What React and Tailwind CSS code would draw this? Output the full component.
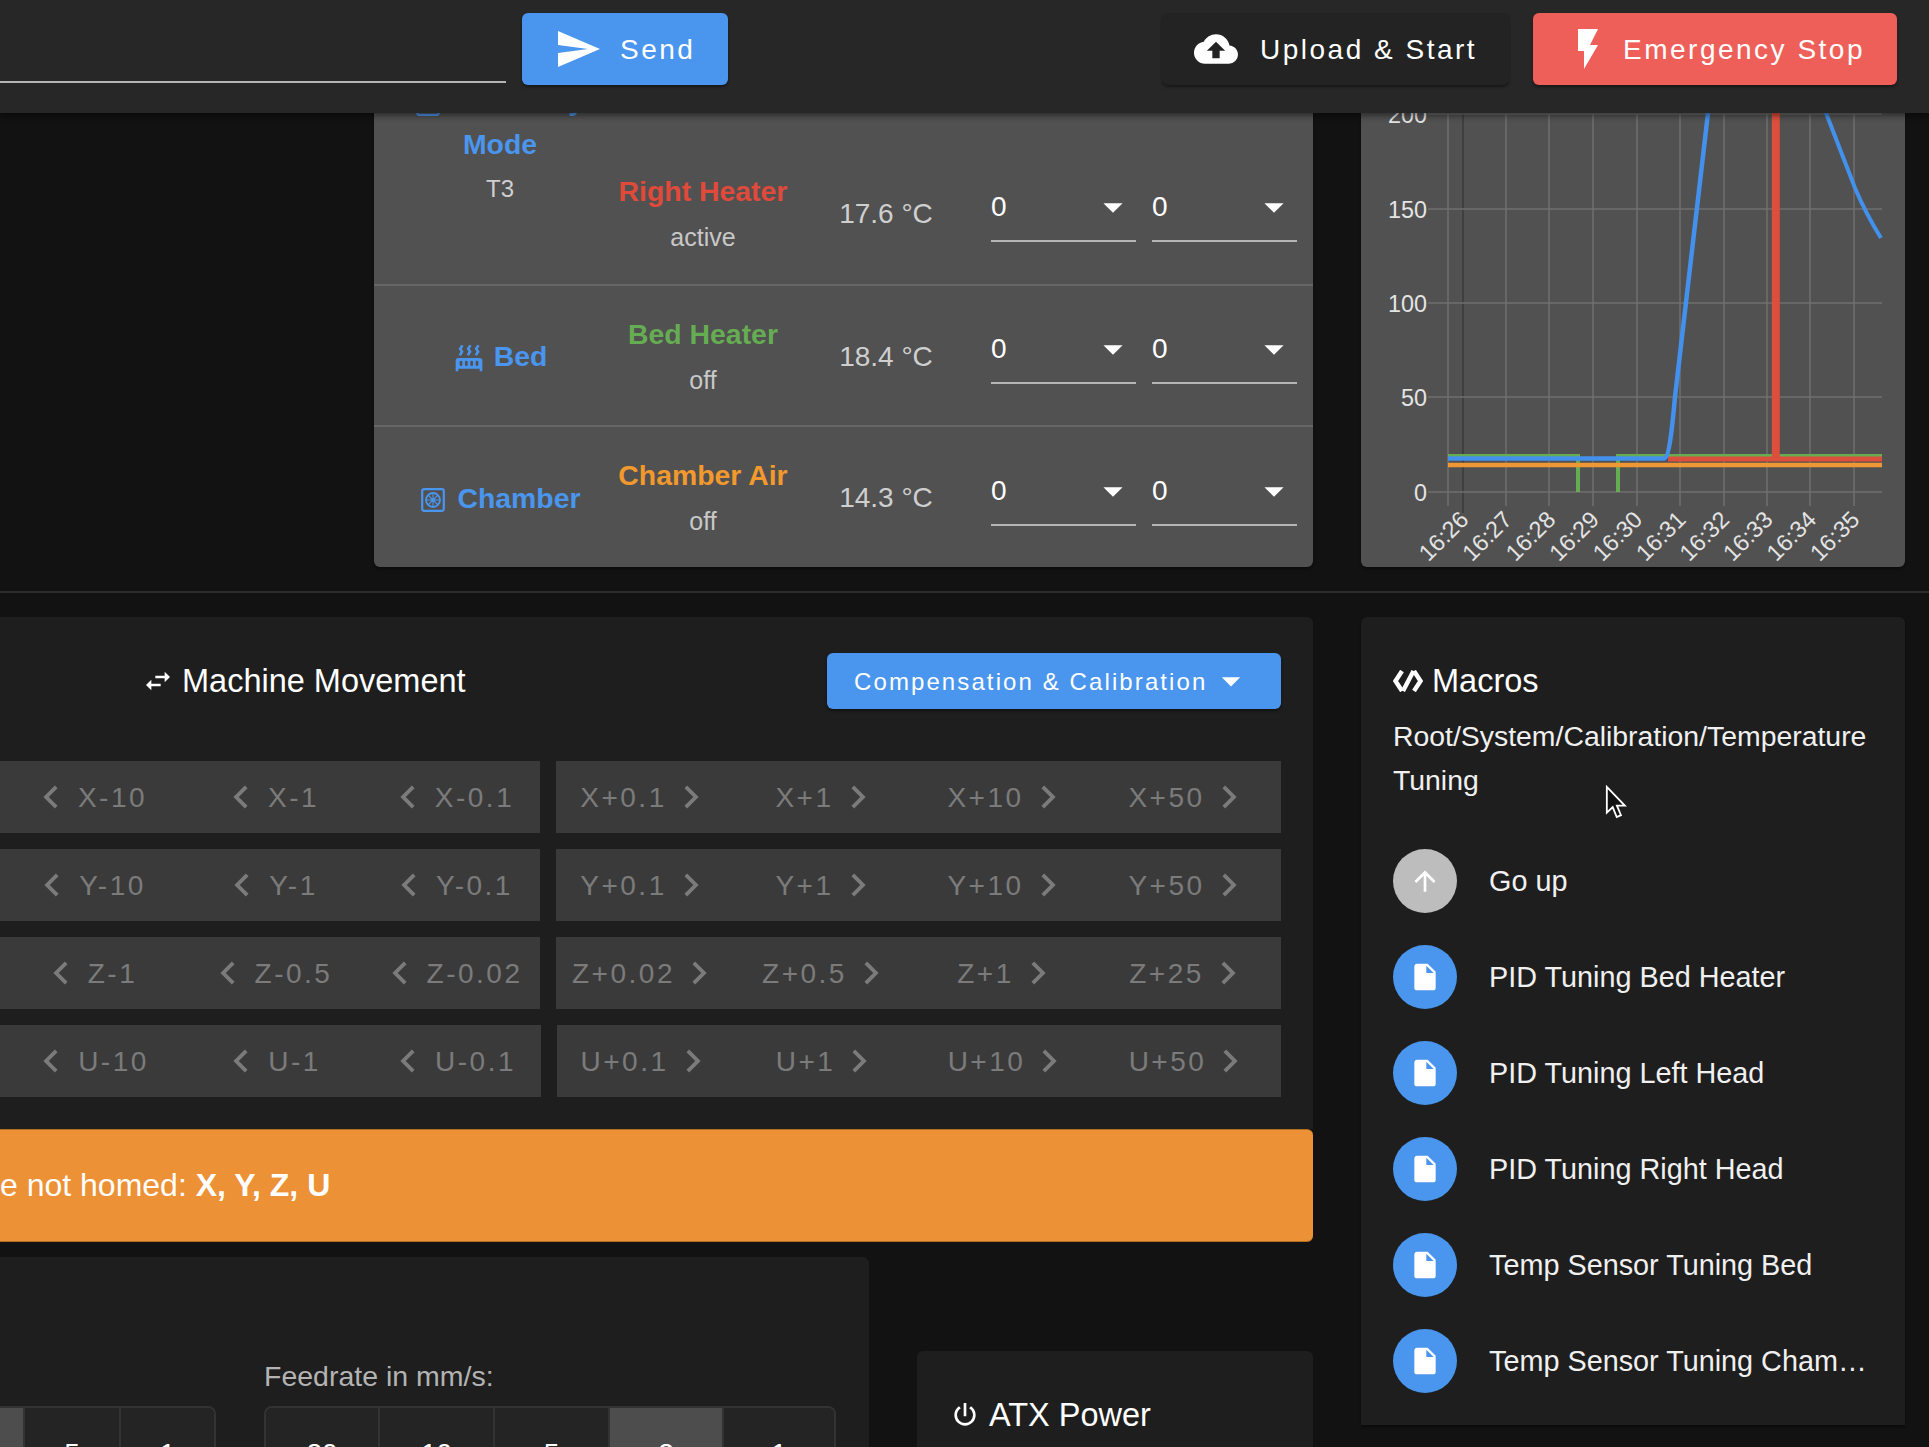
import React from 'react';

const mdi = {
  send: 'M2,21L23,12L2,3V10L17,12L2,14V21Z',
  upload: 'M14,13V17H10V13H7L12,8L17,13M19.35,10.03C18.67,6.59 15.64,4 12,4C9.11,4 6.6,5.64 5.35,8.03C2.34,8.36 0,10.9 0,14A6,6 0 0,0 6,20H19A5,5 0 0,0 24,15C24,12.36 21.95,10.22 19.35,10.03Z',
  flash: 'M7,2V13H10V22L17,10H13L17,2H7Z',
  swap: 'M21,9L17,5V8H10V10H17V13M7,11L3,15L7,19V16H14V14H7V11Z',
  power: 'M16.56,5.44L15.11,6.89C16.84,7.94 18,9.83 18,12A6,6 0 0,1 12,18A6,6 0 0,1 6,12C6,9.83 7.16,7.94 8.88,6.88L7.44,5.44C5.36,6.88 4,9.28 4,12A8,8 0 0,0 12,20A8,8 0 0,0 20,12C20,9.28 18.64,6.88 16.56,5.44M13,3H11V13H13',
  up: 'M13,20H11V8L5.5,13.5L4.08,12.08L12,4.16L19.92,12.08L18.5,13.5L13,8V20Z',
  file: 'M13,9V3.5L18.5,9M6,2C4.89,2 4,2.89 4,4V20A2,2 0 0,0 6,22H18A2,2 0 0,0 20,20V8L14,2H6Z',
  left: 'M15.41,16.58L10.83,12L15.41,7.41L14,6L8,12L14,18L15.41,16.58Z',
  right: 'M8.59,16.58L13.17,12L8.59,7.41L10,6L16,12L10,18L8.59,16.58Z',
  caret: 'M7,10L12,15L17,10H7Z',
  radiator: 'M7.95,3L6.53,5.19L7.95,7.4H7.94L5.95,10.5L4.22,9.6L5.64,7.39L4.22,5.19L6.22,2.09L7.95,3M13.95,2.89L12.53,5.1L13.95,7.3L13.94,7.31L11.95,10.4L10.22,9.5L11.64,7.3L10.22,5.1L12.22,2L13.95,2.89M20,2.89L18.56,5.1L20,7.3V7.31L18,10.4L16.25,9.5L17.67,7.3L16.25,5.1L18.25,2L20,2.89M2,22V14A2,2 0 0,1 4,12H20A2,2 0 0,1 22,14V22H20V20H4V22H2M6,14A1,1 0 0,0 5,15V17A1,1 0 0,0 6,18A1,1 0 0,0 7,17V15A1,1 0 0,0 6,14M10,14A1,1 0 0,0 9,15V17A1,1 0 0,0 10,18A1,1 0 0,0 11,17V15A1,1 0 0,0 10,14M14,14A1,1 0 0,0 13,15V17A1,1 0 0,0 14,18A1,1 0 0,0 15,17V15A1,1 0 0,0 14,14M18,14A1,1 0 0,0 17,15V17A1,1 0 0,0 18,18A1,1 0 0,0 19,17V15A1,1 0 0,0 18,14Z',
};

const Icon = ({ d, className }) => (
  <svg viewBox="0 0 24 24" className={className} fill="currentColor">
    <path d={d} />
  </svg>
);

const ChamberIcon = ({ className }) => (
  <svg viewBox="0 0 24 24" className={className} fill="none" stroke="currentColor">
    <rect x="1.2" y="1.2" width="21.6" height="21.6" rx="2" strokeWidth="2.2" />
    <circle cx="12" cy="12" r="7" strokeWidth="1.8" />
    <circle cx="12" cy="12" r="1.6" fill="currentColor" stroke="none" />
    <path d="M12 5v14M5 12h14M7 7l10 10M17 7L7 17" strokeWidth="1.1" />
  </svg>
);

const TopBar = () => (
  <div className="relative z-10 h-[113px] shrink-0 bg-[#272727] shadow-[0_3px_6px_rgba(0,0,0,0.45)] flex items-start pt-[13px]">
    <div className="w-[506px] h-[70px] border-b-2 border-[#b5b5b5]" />
    <button className="ml-[16px] w-[206px] h-[72px] rounded-[6px] bg-[#4a95ed] text-white text-[28px] tracking-[2.5px] flex items-center pl-[33px] shadow-[0_2px_3px_rgba(0,0,0,0.4)]">
      <Icon d={mdi.send} className="w-[48px] h-[48px] mr-[17px] -translate-x-[1px]" />
      <span className="pt-[2px]">Send</span>
    </button>
    <button className="ml-[434px] w-[347px] h-[72px] rounded-[6px] bg-[#232323] text-white text-[28px] tracking-[2.5px] flex items-center pl-[32px] shadow-[0_2px_3px_rgba(0,0,0,0.4)]">
      <Icon d={mdi.upload} className="w-[44px] h-[44px] mr-[22px]" />
      <span className="pt-[2px]">Upload &amp; Start</span>
    </button>
    <button className="ml-[24px] w-[364px] h-[72px] rounded-[6px] bg-[#ef5f5a] text-white text-[28px] tracking-[2.5px] flex items-center pl-[31px] shadow-[0_2px_3px_rgba(0,0,0,0.4)]">
      <Icon d={mdi.flash} className="w-[48px] h-[48px] mr-[11px]" />
      <span className="pt-[2px]">Emergency Stop</span>
    </button>
  </div>
);

const Select = () => (
  <div className="w-[145px] h-[55px] border-b-2 border-[#b5b5b5] flex items-center justify-between pb-[13px] text-white text-[28px]">
    <span>0</span>
    <Icon d={mdi.caret} className="w-[46px] h-[46px] text-white" />
  </div>
);

const HeaterCells = ({ name, color, state, temp }) => (
  <>
    <div className="w-[194px] flex flex-col items-center whitespace-nowrap">
      <div className={`h-[46px] leading-[46px] text-[28.4px] font-bold ${color}`}>{name}</div>
      <div className="h-[46px] leading-[46px] text-[25px] text-[#c8c8c8]">{state}</div>
    </div>
    <div className="w-[172px] text-center text-[28px] text-[#cfcfcf]">{temp}</div>
    <div className="pl-[19px] flex gap-[16px]">
      <Select />
      <Select />
    </div>
  </>
);

const ToolTable = () => (
  <div className="w-[939px] rounded-[6px] bg-[#515151] shadow-[0_2px_3px_rgba(0,0,0,0.4)] overflow-hidden">
    <div className="flex h-[283px]">
      <div className="w-[232px] pl-[20px] pt-[3px] flex flex-col items-center justify-center text-[#4a95ed] font-bold text-[28.4px] leading-[44px]">
        <div className="flex items-center whitespace-nowrap">
          <ChamberIcon className="w-[24px] h-[24px] mr-[24px] translate-y-[4px]" />
          X-Gantry
        </div>
        <div>Mode</div>
        <div className="mt-[1px] font-normal text-[24px] text-[#cfcfcf]">T3</div>
      </div>
      <div className="flex flex-col">
        <div className="h-[141px]" />
        <div className="h-[142px] flex items-center pt-[2px]">
          <HeaterCells name="Right Heater" color="text-[#e04a3a]" state="active" temp="17.6 °C" />
        </div>
      </div>
    </div>
    <div className="flex items-center h-[141px] pt-[2px] border-t-2 border-[#666666]">
      <div className="w-[232px] pl-[20px] flex items-center justify-center text-[#4a95ed] font-bold text-[28.4px]">
        <Icon d={mdi.radiator} className="w-[32px] h-[32px] mr-[9px] translate-y-[2px]" />
        Bed
      </div>
      <HeaterCells name="Bed Heater" color="text-[#66ac52]" state="off" temp="18.4 °C" />
    </div>
    <div className="flex items-center h-[142px] pt-[2px] border-t-2 border-[#666666]">
      <div className="w-[232px] pl-[22px] flex items-center justify-center text-[#4a95ed] font-bold text-[28.4px] whitespace-nowrap">
        <ChamberIcon className="w-[24px] h-[24px] mr-[12px] translate-y-[2px]" />
        Chamber
      </div>
      <HeaterCells name="Chamber Air" color="text-[#f2992e]" state="off" temp="14.3 °C" />
    </div>
  </div>
);

const ChartCard = () => {
  const ys = [[200, 114], [150, 209], [100, 303], [50, 397], [0, 492]];
  const xs = [1448, 1506, 1549, 1593, 1637, 1680, 1724, 1767, 1810, 1854];
  const ticks = ['16:26', '16:27', '16:28', '16:29', '16:30', '16:31', '16:32', '16:33', '16:34', '16:35'];
  return (
    <div className="ml-[48px] w-[544px] rounded-[6px] bg-[#515151] shadow-[0_2px_3px_rgba(0,0,0,0.4)]">
      <svg viewBox="1361 1 544 566" className="w-[544px] h-[566px]">
        {xs.map((x) => (
          <line key={x} x1={x} x2={x} y1="1" y2="506" stroke="#6f6f6f" strokeWidth="1.5" />
        ))}
        <line x1="1463" x2="1463" y1="1" y2="513" stroke="#3f3f3f" strokeWidth="2" />
        {ys.map(([v, y]) => (
          <g key={v}>
            <line x1="1428" x2="1882" y1={y} y2={y} stroke="#6f6f6f" strokeWidth="1.5" />
            <text x="1427" y={y + 9} textAnchor="end" fontSize="23.4" fill="#e4e4e4">{v}</text>
          </g>
        ))}
        {ticks.map((t, i) => {
          const x = 1463 + i * 43.45 + 7;
          return (
            <text key={t} x={x} y="521" textAnchor="end" fontSize="23.4" fill="#e4e4e4" transform={`rotate(-45 ${x} 521)`}>{t}</text>
          );
        })}
        <path d="M1448 456H1578V492M1618 492V456H1882" fill="none" stroke="#66ac52" strokeWidth="4" />
        <path d="M1448 465H1882" fill="none" stroke="#ee9734" strokeWidth="4.5" />
        <path d="M1668 459H1882" fill="none" stroke="#dd4f3d" strokeWidth="5" />
        <path d="M1775.8 1V459" fill="none" stroke="#dd4f3d" strokeWidth="8" />
        <path d="M1448 458.5H1664C1669 458.5 1672 430 1675 397L1708 113L1714 60" fill="none" stroke="#4391ec" strokeWidth="4.5" />
        <path d="M1821 100L1855 188C1863 207 1871 222 1881 238" fill="none" stroke="#4391ec" strokeWidth="4" />
      </svg>
    </div>
  );
};

const JogButton = ({ label, dir, offset }) => (
  <button className={`${offset} w-[181px] h-full shrink-0 flex items-center justify-center pt-[2px] text-[28px] tracking-[2.5px] text-[#7b7b7b] whitespace-nowrap`}>
    {dir === 'left' && <Icon d={mdi.left} className="w-[46px] h-[46px] mr-[4px] shrink-0 -translate-y-[1px]" />}
    {label}
    {dir === 'right' && <Icon d={mdi.right} className="w-[46px] h-[46px] ml-[1px] shrink-0 -translate-y-[1px]" />}
  </button>
);

const jogRows = [
  { left: ['X-10', 'X-1', 'X-0.1'], right: ['X+0.1', 'X+1', 'X+10', 'X+50'], leftW: 'w-[540px]', rightW: 'w-[725px]', offset: '-ml-[3px]' },
  { left: ['Y-10', 'Y-1', 'Y-0.1'], right: ['Y+0.1', 'Y+1', 'Y+10', 'Y+50'], leftW: 'w-[540px]', rightW: 'w-[725px]', offset: '-ml-[3px]' },
  { left: ['Z-1', 'Z-0.5', 'Z-0.02'], right: ['Z+0.02', 'Z+0.5', 'Z+1', 'Z+25'], leftW: 'w-[540px]', rightW: 'w-[725px]', offset: '-ml-[3px]' },
  { left: ['U-10', 'U-1', 'U-0.1'], right: ['U+0.1', 'U+1', 'U+10', 'U+50'], leftW: 'w-[541px]', rightW: 'w-[724px]', offset: '-ml-[2px]' },
];

const MachineMovement = () => (
  <div className="h-[512px] rounded-tr-[6px] bg-[#1e1e1e] pt-[36px]">
    <div className="flex items-center justify-between h-[56px] pl-[142px] pr-[32px]">
      <div className="flex items-center text-white text-[32.5px]">
        <Icon d={mdi.swap} className="w-[32px] h-[32px] mr-[8px]" />
        Machine Movement
      </div>
      <button className="w-[454px] h-[56px] rounded-[6px] bg-[#4a95ed] text-white text-[24px] tracking-[2.1px] flex items-center pl-[27px] whitespace-nowrap shadow-[0_2px_3px_rgba(0,0,0,0.4)]">
        <span className="pt-[1px]">Compensation &amp; Calibration</span>
        <Icon d={mdi.caret} className="w-[44px] h-[44px] ml-[2px] shrink-0" />
      </button>
    </div>
    <div className="mt-[52px] flex flex-col gap-[16px]">
      {jogRows.map((row) => (
        <div key={row.left[0]} className="flex h-[72px] gap-[16px]">
          <div className={`${row.leftW} flex bg-[#3a3a3a]`}>
            {row.left.map((l, i) => (
              <JogButton key={l} label={l} dir="left" offset={i === 0 ? row.offset : ''} />
            ))}
          </div>
          <div className={`${row.rightW} flex bg-[#3a3a3a]`}>
            {row.right.map((l) => (
              <JogButton key={l} label={l} dir="right" offset="pl-[1px]" />
            ))}
          </div>
        </div>
      ))}
    </div>
  </div>
);

const Toggle = ({ items, className }) => (
  <div className={`flex h-[92px] rounded-[8px] border-2 border-[#333333] overflow-hidden ${className}`}>
    {items.map(([label, w, active], i) => (
      <div
        key={i}
        style={{ width: w }}
        className={`flex items-center justify-center pt-[3px] text-[28px] text-white ${i > 0 ? 'border-l-2 border-[#333333]' : ''} ${active ? 'bg-[#4d4d4d]' : 'bg-[#242424]'}`}
      >
        {label}
      </div>
    ))}
  </div>
);

const BottomCards = () => (
  <div className="mt-[15px] flex gap-[48px] items-start">
    <div className="w-[869px] h-[300px] rounded-tr-[6px] bg-[#1e1e1e] pt-[103px] flex">
      <div className="w-[264px] pt-[46px]">
        <Toggle className="w-[216px] rounded-l-none border-l-0" items={[['', 23, true], ['5', 96, false], ['1', 95, false]]} />
      </div>
      <div>
        <div className="h-[46px] text-[28.5px] leading-[32px] text-[#b3b3b3]">Feedrate in mm/s:</div>
        <Toggle className="w-[572px]" items={[['20', 112, false], ['10', 115, false], ['5', 115, false], ['2', 114, true], ['1', 112, false]]} />
      </div>
    </div>
    <div className="mt-[94px] w-[396px] h-[200px] rounded-t-[6px] bg-[#1e1e1e] pt-[48px] pl-[32px] flex items-start">
      <div className="flex items-center text-white text-[32.5px] h-[32px]">
        <Icon d={mdi.power} className="w-[32px] h-[32px] mr-[8px]" />
        ATX Power
      </div>
    </div>
  </div>
);

const macros = ['PID Tuning Bed Heater', 'PID Tuning Left Head', 'PID Tuning Right Head', 'Temp Sensor Tuning Bed', 'Temp Sensor Tuning Chamber'];

const MacroRow = ({ icon, bg, label }) => (
  <div className="h-[96px] flex items-center">
    <div className={`w-[64px] h-[64px] rounded-full shrink-0 flex items-center justify-center text-white ${bg}`}>
      <Icon d={icon} className="w-[32px] h-[32px]" />
    </div>
    <div className="ml-[32px] w-[378px] pt-[2px] truncate text-[28.8px] text-[#f0f0f0]">{label}</div>
  </div>
);

const Macros = () => (
  <div className="ml-[48px] w-[544px] h-[808px] rounded-t-[6px] bg-[#1e1e1e] pl-[32px] pt-[44px] shadow-[0_2px_3px_rgba(0,0,0,0.4)]">
    <div className="flex items-center h-[40px] text-white text-[32.5px]">
      <svg viewBox="0 0 30 22" className="w-[30px] h-[22px] mr-[9px]" fill="none" stroke="currentColor" strokeWidth="4.4">
        <path d="M9 1L2.5 11L9 21" />
        <path d="M20.5 1L10 21" />
        <path d="M21 1L27.5 11L21 21" />
      </svg>
      Macros
    </div>
    <div className="mt-[13px] w-[490px] text-[28.4px] leading-[44px] text-[#f0f0f0]">
      Root/System/Calibration/Temperature Tuning
    </div>
    <div className="mt-[31px]">
      <MacroRow icon={mdi.up} bg="bg-[#bdbdbd]" label="Go up" />
      {macros.map((m) => (
        <MacroRow key={m} icon={mdi.file} bg="bg-[#4a95ed]" label={m} />
      ))}
    </div>
  </div>
);

export default function App() {
  return (
    <div className="relative w-[1929px] h-[1447px] overflow-hidden flex flex-col bg-[#121212] font-['Liberation_Sans',Arial,sans-serif]">
      <TopBar />
      <div className="-mt-[112px]">
        <div className="flex pl-[374px]">
          <ToolTable />
          <ChartCard />
        </div>
        <div className="mt-[24px] h-[2px] bg-[#2b2b2b]" />
        <div className="mt-[24px] flex">
          <div className="w-[1313px]">
            <MachineMovement />
            <div className="h-[113px] pb-[2px] rounded-r-[6px] bg-[#ec9135] border-y border-[#b06f22] flex items-center text-[32px] text-white whitespace-nowrap">
              <span>e not homed:&nbsp;<b>X, Y, Z, U</b></span>
            </div>
            <BottomCards />
          </div>
          <Macros />
        </div>
      </div>
      {/* mouse pointer caught in the screenshot */}
      <svg viewBox="0 0 12 19" className="absolute left-[1605px] top-[785px] w-[22px] h-[35px]">
        <path d="M1 1V15L4.2 12L6.4 17.4L8.7 16.4L6.5 11.2H10.8Z" fill="#111111" stroke="#ffffff" strokeWidth="1" />
      </svg>
    </div>
  );
}
